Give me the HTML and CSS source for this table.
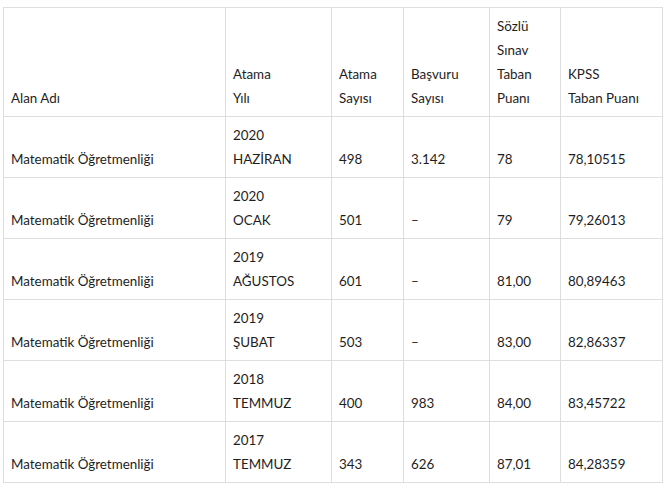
FILE: index.html
```html
<!DOCTYPE html>
<html lang="tr">
<head>
<meta charset="utf-8">
<link rel="stylesheet" href="styles.css">
</head>
<body>
<table class="data">
  <colgroup>
    <col class="c1"><col class="c2"><col class="c3"><col class="c4"><col class="c5"><col class="c6">
  </colgroup>
  <tr>
    <td>Alan Adı</td>
    <td>Atama<br>Yılı</td>
    <td>Atama<br>Sayısı</td>
    <td>Başvuru<br>Sayısı</td>
    <td>Sözlü<br>Sınav<br>Taban<br>Puanı</td>
    <td>KPSS<br>Taban Puanı</td>
  </tr>
  <tr>
    <td>Matematik Öğretmenliği</td>
    <td>2020<br>HAZİRAN</td>
    <td>498</td>
    <td>3.142</td>
    <td>78</td>
    <td>78,10515</td>
  </tr>
  <tr>
    <td>Matematik Öğretmenliği</td>
    <td>2020<br>OCAK</td>
    <td>501</td>
    <td>–</td>
    <td>79</td>
    <td>79,26013</td>
  </tr>
  <tr>
    <td>Matematik Öğretmenliği</td>
    <td>2019<br>AĞUSTOS</td>
    <td>601</td>
    <td>–</td>
    <td>81,00</td>
    <td>80,89463</td>
  </tr>
  <tr>
    <td>Matematik Öğretmenliği</td>
    <td>2019<br>ŞUBAT</td>
    <td>503</td>
    <td>–</td>
    <td>83,00</td>
    <td>82,86337</td>
  </tr>
  <tr>
    <td>Matematik Öğretmenliği</td>
    <td>2018<br>TEMMUZ</td>
    <td>400</td>
    <td>983</td>
    <td>84,00</td>
    <td>83,45722</td>
  </tr>
  <tr>
    <td>Matematik Öğretmenliği</td>
    <td>2017<br>TEMMUZ</td>
    <td>343</td>
    <td>626</td>
    <td>87,01</td>
    <td>84,28359</td>
  </tr>
</table>
</body>
</html>
```
FILE: styles.css
```css
html, body {
  margin: 0;
  background: #fff;
}
body {
  padding: 7px 0 0 3px;
  font-family: Lato, "Open Sans", sans-serif;
  font-size: 13.4px;
  color: #1e1e1e;
}
.data {
  border-collapse: collapse;
  table-layout: fixed;
  width: 659px;
}
.c1 { width: 222px; }
.c2 { width: 106px; }
.c3 { width: 72px; }
.c4 { width: 86px; }
.c5 { width: 71px; }
.c6 { width: 102px; }
.data td {
  border: 1px solid #dedede;
  padding: 6px 7px;
  line-height: 24px;
  vertical-align: bottom;
  text-align: left;
}
```
